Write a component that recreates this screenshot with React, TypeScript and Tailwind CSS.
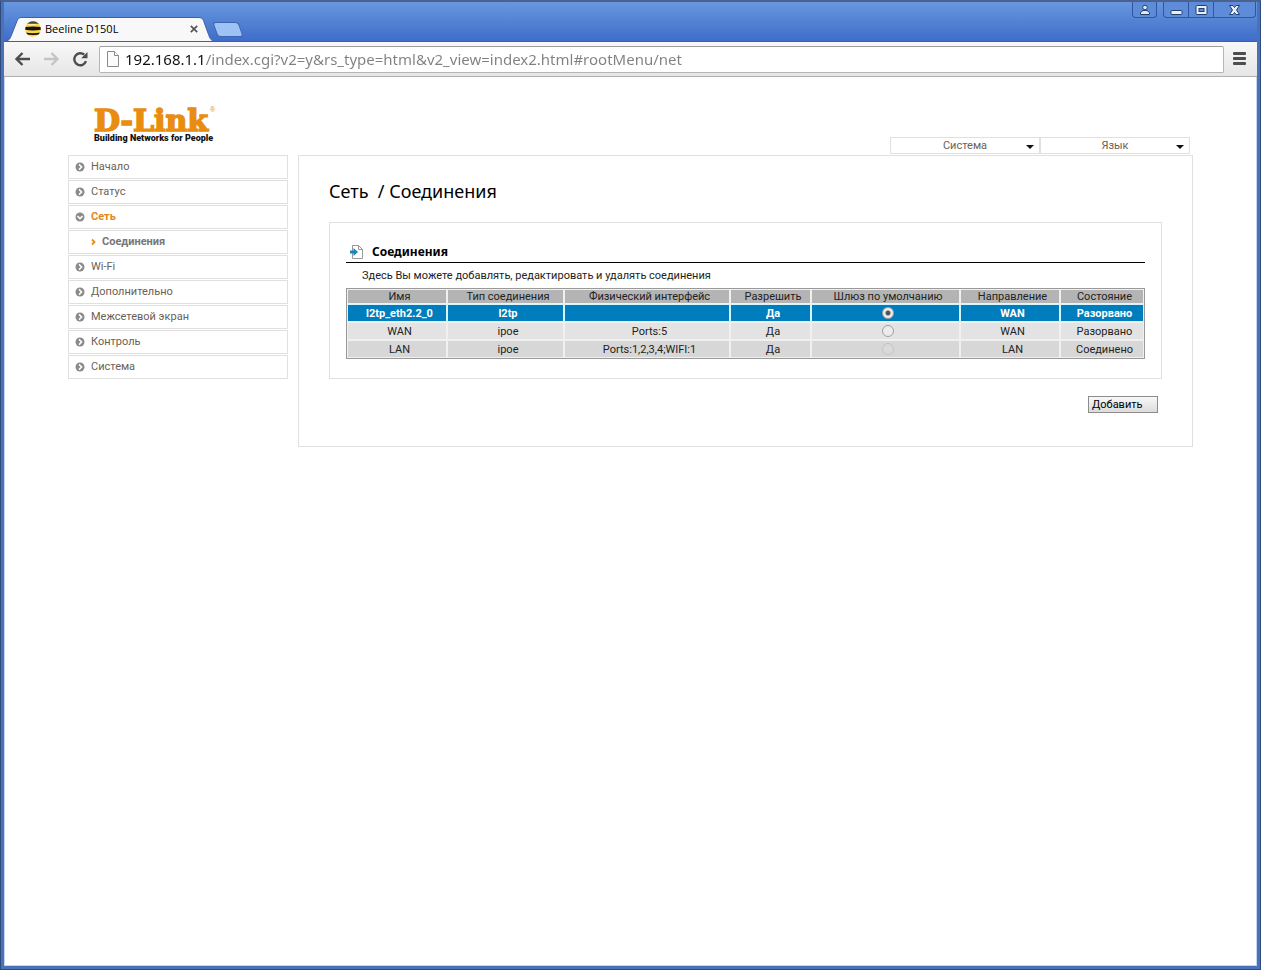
import { useState } from "react";
import clsx from "clsx";

const menu = [
  { title: "Начало" },
  { title: "Статус" },
  { title: "Сеть", open: true },
  { title: "Соединения", child: true },
  { title: "Wi-Fi" },
  { title: "Дополнительно" },
  { title: "Межсетевой экран" },
  { title: "Контроль" },
  { title: "Система" },
];

const columns = [
  { title: "Имя", width: "w-[100px]" },
  { title: "Тип соединения", width: "w-[117px]" },
  { title: "Физический интерфейс", width: "w-[166px]" },
  { title: "Разрешить", width: "w-[81px]" },
  { title: "Шлюз по умолчанию", width: "w-[149px]" },
  { title: "Направление", width: "w-[100px]" },
  { title: "Состояние", width: "w-[84px]" },
];

const connections = [
  { name: "l2tp_eth2.2_0", type: "l2tp", iface: "", enabled: "Да", direction: "WAN", state: "Разорвано" },
  { name: "WAN", type: "ipoe", iface: "Ports:5", enabled: "Да", direction: "WAN", state: "Разорвано" },
  { name: "LAN", type: "ipoe", iface: "Ports:1,2,3,4;WIFI:1", enabled: "Да", direction: "LAN", state: "Соединено", locked: true },
];

function Favicon() {
  return (
    <svg viewBox="0 0 16 16" className="size-4 shrink-0">
      <defs>
        <clipPath id="ball">
          <circle cx="8" cy="8" r="7.8" />
        </clipPath>
      </defs>
      <g clipPath="url(#ball)">
        <rect width="16" height="16" fill="#fbd54a" />
        <path d="M0 0h16v2.200q-8 1-16 0z" fill="#4a4436" />
        <path d="M0 6q8-1.200 16 0v2.800q-8 1.400-16 0z" fill="#17130c" />
        <path d="M0 11.500q8 1.400 16 0v1.800q-8 1.400-16 0z" fill="#17130c" />
        <path d="M3 3.300h8v1H3z" fill="#fff3b8" />
      </g>
    </svg>
  );
}

function WindowControls() {
  const button = "flex h-full items-center justify-center";
  const group = "flex h-4 overflow-hidden rounded-b border border-t-0 border-[#2f569f] bg-[#5f8cd8]";
  return (
    <div className="flex items-start gap-[6px] pr-px">
      <div className={group}>
        <button aria-label="User" className={clsx(button, "w-[23px]")}>
          <svg viewBox="0 0 12 12" className="size-3" fill="#dce9fb" stroke="#24406f">
            <path d="M1.500 10.500V8.500L4 6.500h4l2.500 2v2z" />
            <circle cx="6" cy="3.500" r="2.300" />
          </svg>
        </button>
      </div>
      <div className={group}>
        <button aria-label="Minimize" className={clsx(button, "w-[25px] border-r border-[#2f569f]")}>
          <svg viewBox="0 0 13 12" className="h-3 w-[13px]" fill="#e6effc" stroke="#24406f">
            <rect x="1" y="6.500" width="11" height="4" rx="1" />
          </svg>
        </button>
        <button aria-label="Maximize" className={clsx(button, "w-[25px] border-r border-[#2f569f]")}>
          <svg viewBox="0 0 13 12" className="h-3 w-[13px]" fill="#e6effc" stroke="#24406f">
            <rect x="1" y="1.500" width="11" height="9" rx="1" />
            <rect x="4" y="4.500" width="5" height="3" fill="#5f8cd8" />
          </svg>
        </button>
        <button aria-label="Close" className={clsx(button, "w-[41px]")}>
          <svg viewBox="0 0 13 12" className="h-3 w-[13px]" fill="#e6effc" stroke="#24406f">
            <path d="M1.500 1.500H5L6.500 3.500 8 1.500h3.500L8.500 6l3 4.500H8L6.500 8.500 5 10.500H1.500l3-4.500z" />
          </svg>
        </button>
      </div>
    </div>
  );
}

function TitleBar() {
  return (
    <div className="flex h-[39px] items-start justify-between bg-linear-to-b from-[#6897df] to-[#3f6dc9]">
      <div className="flex h-full items-end">
        <div className="relative flex h-6 w-[208px] items-center pr-[10px] pl-[21px]">
          <svg viewBox="0 0 208 25" className="absolute top-0 left-0 h-[25px] w-[208px]">
            <path
              d="M0 24.500C5 24 6 22 7.500 18L13 4C14.200 1.200 15 .5 18 .5h176c3 0 4.500.700 5.500 3l5 14c1.500 4 2.500 6.500 7 7z"
              fill="#f8f8f8"
              stroke="#3a61aa"
            />
          </svg>
          <div className="relative flex flex-1 items-center gap-1">
            <Favicon />
            <span className="flex-1 font-['Open_Sans',sans-serif] text-[11px] text-black">Beeline D150L</span>
            <button aria-label="Close tab" className="flex size-4 items-center justify-center">
              <svg viewBox="0 0 8 8" className="size-2" stroke="#555" strokeWidth="1.700">
                <path d="M.8.8l6.400 6.400M7.200.8L.8 7.200" />
              </svg>
            </button>
          </div>
        </div>
        <button
          aria-label="New tab"
          className="mb-1 ml-[3px] h-[15px] w-[26px] skew-x-[20deg] rounded-[3px] border border-[#3d65b2] bg-[#9dc2f3]"
        />
      </div>
      <WindowControls />
    </div>
  );
}

function Toolbar() {
  return (
    <div className="flex h-9 items-center border-t border-b border-t-[#3a61aa] border-b-[#b0b0b0] bg-linear-to-b from-[#f8f8f8] to-[#e6e6e6] pr-[11px] pl-[10px]">
      <div className="flex items-center gap-3">
        <button aria-label="Back">
          <svg viewBox="0 0 17 16" className="h-4 w-[17px]" fill="none" stroke="#4d4d4d" strokeWidth="2.400">
            <path d="M16 8H3M8.500 2L2.500 8l6 6" />
          </svg>
        </button>
        <button aria-label="Forward">
          <svg viewBox="0 0 17 16" className="h-4 w-[17px]" fill="none" stroke="#c4c4c4" strokeWidth="2.400">
            <path d="M1 8h13M8.500 2l6 6-6 6" />
          </svg>
        </button>
        <button aria-label="Reload">
          <svg viewBox="0 0 17 16" className="h-4 w-[17px]">
            <path d="M14 10.200A6 6 0 1 1 12.300 3.700" fill="none" stroke="#4d4d4d" strokeWidth="2.400" />
            <path d="M15.500 1v6.200H9.200z" fill="#4d4d4d" />
          </svg>
        </button>
      </div>
      <label className="ml-[10px] flex h-[27px] flex-1 items-center gap-1 rounded-[2px] border border-[#b5b5b5] border-t-[#9f9f9f] bg-white pl-[5px]">
        <svg viewBox="0 0 16 16" className="size-4 shrink-0" fill="#fbfbfb" stroke="#8a8a8a">
          <path d="M2.500.5h7l4 4v11h-11z" />
          <path d="M9.500.5v4h4" />
        </svg>
        <input
          aria-label="Address"
          defaultValue="192.168.1.1/index.cgi?v2=y&rs_type=html&v2_view=index2.html#rootMenu/net"
          className="min-w-0 flex-1 bg-[linear-gradient(to_right,#111_80px,#808080_80px)] bg-clip-text pb-px font-['Noto_Sans',sans-serif] text-[15px] leading-5 text-transparent outline-none"
        />
      </label>
      <button aria-label="Menu" className="ml-[9px]">
        <svg viewBox="0 0 13 14" className="h-[14px] w-[13px]" fill="#4d4d4d">
          <rect y="0" width="13" height="3" rx="1" />
          <rect y="5" width="13" height="3" rx="1" />
          <rect y="10" width="13" height="3" rx="1" />
        </svg>
      </button>
    </div>
  );
}

function Logo() {
  return (
    <svg viewBox="0 0 128 40" className="h-10 w-32 overflow-visible" role="img" aria-label="D-Link">
      <text x="0" y="25" fill="#e98d10" stroke="#e98d10" strokeWidth="1.600" className="font-['DejaVu_Serif',serif] text-[30px] font-bold">
        D-Link
      </text>
      <text x="116" y="6" fill="#e98d10" className="font-['Liberation_Sans',sans-serif] text-[7px]">
        ®
      </text>
      <text x="0" y="35" fill="#111" className="font-['Roboto',sans-serif] text-[9px] font-black">
        Building Networks for People
      </text>
    </svg>
  );
}

function HeaderSelect({ title }: { title: string }) {
  return (
    <div className="relative w-[150px]">
      <select
        aria-label={title}
        className="block h-[17px] w-full appearance-none border border-[#e0e0e0] bg-white text-center text-[11px] leading-[15px] text-[#6b5f55] [text-align-last:center]"
      >
        <option>{title}</option>
      </select>
      <svg viewBox="0 0 8 4" className="pointer-events-none absolute top-2 right-[6px] h-1 w-2" fill="#111">
        <path d="M0 0h8L4 4z" />
      </svg>
    </div>
  );
}

function MenuIcon({ open }: { open?: boolean }) {
  return (
    <svg viewBox="0 0 10 10" className="size-[10px] shrink-0">
      <circle cx="5" cy="5" r="4.500" fill="#8a8a8a" />
      <path d={open ? "M2.400 4L5 6.600 7.600 4" : "M4 2.400L6.600 5 4 7.600"} fill="none" stroke="#fff" strokeWidth="1.500" />
    </svg>
  );
}

function SideMenu() {
  return (
    <nav className="w-[220px] shrink-0">
      <ul className="flex flex-col gap-px">
        {menu.map((item) => (
          <li key={item.title}>
            <a
              href="#rootMenu/net"
              className={clsx(
                "flex h-6 items-center border border-[#e0e0e0] text-[11px]",
                item.child ? "gap-[6px] pl-[22px] font-bold text-[#777]" : "gap-[6px] pl-[6px]",
                item.open && "font-bold text-[#e5861a]",
                !item.child && !item.open && "text-[#6b5f55]",
              )}
            >
              {item.child ? (
                <svg viewBox="0 0 5 8" className="h-2 w-[5px]" fill="none" stroke="#e98d10" strokeWidth="1.800">
                  <path d="M1 1.500l2.500 2.500L1 6.500" />
                </svg>
              ) : (
                <MenuIcon open={item.open} />
              )}
              {item.title}
            </a>
          </li>
        ))}
      </ul>
    </nav>
  );
}

function ConnectionsTable() {
  const [gateway, setGateway] = useState("l2tp_eth2.2_0");

  return (
    <table className="w-full table-fixed border-separate border-spacing-0 border border-[#999] text-center text-[11px] leading-[13px] text-[#222]">
      <thead>
        <tr>
          {columns.map((col) => (
            <th key={col.title} className={clsx("h-[15px] border border-[#f0f0f0] bg-[#b4b4b4] p-0 pl-[5px] font-normal whitespace-nowrap", col.width)}>
              {col.title}
            </th>
          ))}
        </tr>
      </thead>
      <tbody>
        {connections.map((row, i) => {
          const cell = clsx(
            "h-[18px] border p-0 pl-[5px] whitespace-nowrap",
            i === 0 && "border-[#d9f3fc] bg-[#007dbc] font-bold text-white",
            i === 1 && "border-[#f0f0f0] bg-[#e3e3e3]",
            i === 2 && "border-[#f0f0f0] bg-[#d7d7d7]",
          );
          return (
            <tr key={row.name}>
              <td className={cell}>{row.name}</td>
              <td className={cell}>{row.type}</td>
              <td className={cell}>{row.iface}</td>
              <td className={cell}>{row.enabled}</td>
              <td className={cell}>
                <input
                  type="radio"
                  name="gateway"
                  aria-label={row.name}
                  checked={gateway === row.name}
                  disabled={row.locked}
                  onChange={() => setGateway(row.name)}
                  className="mx-auto block size-3 appearance-none rounded-full border border-[#a0a0a0] bg-[#ececec] checked:bg-[radial-gradient(circle,#555_2px,#ececec_3px)] disabled:border-[#c4c4c4] disabled:bg-[#d9d9d9]"
                />
              </td>
              <td className={cell}>{row.direction}</td>
              <td className={cell}>{row.state}</td>
            </tr>
          );
        })}
      </tbody>
    </table>
  );
}

export default function App() {
  return (
    <div className="flex min-h-screen flex-col border border-t-2 border-[#2f4a7c] border-t-[#49628f] bg-[#4a72b8] px-[3px] pb-[3px] font-['Roboto',sans-serif]">
      <TitleBar />
      <Toolbar />

      <div className="flex-1 border-x border-b border-[#c5d5ee] bg-white px-[63px]">
        {/* Logo and top selects */}
        <header className="flex h-[78px] items-end justify-between pr-[3px] pb-px pl-[26px]">
          <div className="pb-2">
            <Logo />
          </div>
          <div className="flex">
            <HeaderSelect title="Система" />
            <HeaderSelect title="Язык" />
          </div>
        </header>

        <div className="flex items-start gap-[10px]">
          <SideMenu />

          {/* Content */}
          <main className="min-w-0 flex-1 border border-[#e0e0e0] px-[30px] pt-[23px] pb-[33px]">
            <h1 className="font-['Noto_Sans',sans-serif] text-[18px] leading-6 whitespace-pre text-black">Сеть  / Соединения</h1>

            <section className="mt-[19px] border border-[#e0e0e0] px-4 pt-[18px] pb-[19px]">
              <h2 className="flex h-[22px] items-center gap-2 border-b border-black pl-1 font-['Noto_Sans',sans-serif] text-[12px] font-bold text-black">
                <svg viewBox="0 0 14 14" className="size-[14px]">
                  <path d="M2.500.5h6l4 4v9h-10z" fill="#fff" stroke="#999" />
                  <path d="M8.500.5v4h4" fill="none" stroke="#999" />
                  <path d="M0 5.500h3.500V3L8 7l-4.500 4V8.500H0z" fill="#1a86b8" />
                </svg>
                Соединения
              </h2>
              <p className="py-[5px] pl-4 text-[11px] leading-[15px] text-[#222]">
                Здесь Вы можете добавлять, редактировать и удалять соединения
              </p>
              <ConnectionsTable />
            </section>

            <div className="mt-[17px] flex justify-end pr-1">
              <button className="h-[17px] w-[70px] border border-[#8c8c8c] bg-linear-to-b from-[#f8f8f8] to-[#dcdcdc] pl-[3px] text-left text-[11px] leading-[15px] text-black">
                Добавить
              </button>
            </div>
          </main>
        </div>
      </div>
    </div>
  );
}
